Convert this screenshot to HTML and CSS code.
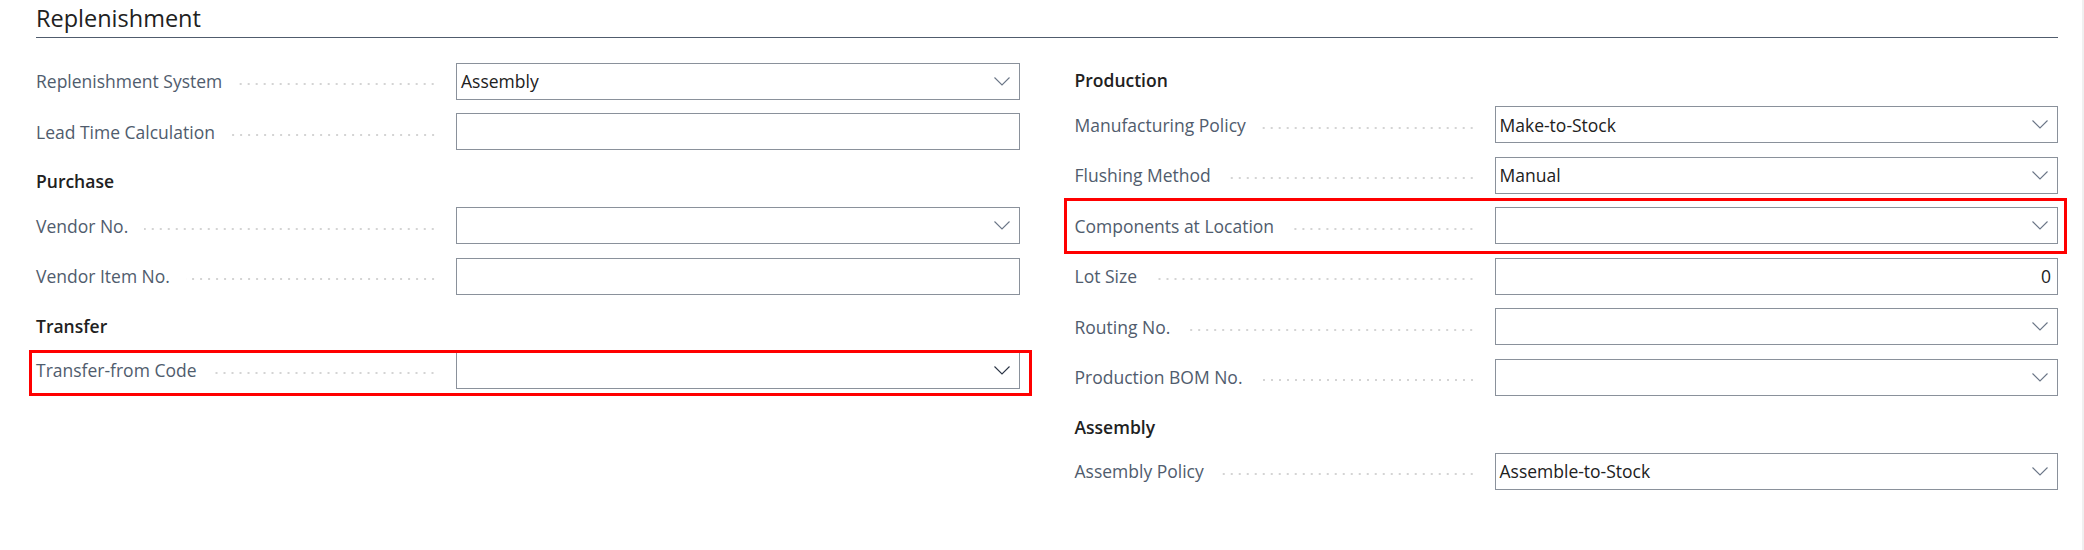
FILE: index.html
```html
<!DOCTYPE html>
<html lang="en">

<head>
    <meta charset="UTF-8">
    <title>Item Card - Replenishment</title>
    <link rel="stylesheet" href="styles.css">
</head>

<body>
    <div class="page">
        <h2 class="title">Replenishment</h2>

        <div class="columns">
            <!-- colonne gauche -->
            <div class="column">
                <div class="field">
                    <div class="caption"><span>Replenishment System</span><i class="dots"></i></div>
                    <div class="box select">
                        <span class="value">Assembly</span>
                        <svg class="chevron" width="16" height="9" viewBox="0 0 16 9"><polyline points="0.5,0.5 8,8 15.5,0.5" /></svg>
                    </div>
                </div>
                <div class="field">
                    <div class="caption"><span>Lead Time Calculation</span><i class="dots"></i></div>
                    <div class="box"></div>
                </div>

                <div class="group">Purchase</div>
                <div class="field">
                    <div class="caption"><span>Vendor No.</span><i class="dots"></i></div>
                    <div class="box select">
                        <span class="value"></span>
                        <svg class="chevron" width="16" height="9" viewBox="0 0 16 9"><polyline points="0.5,0.5 8,8 15.5,0.5" /></svg>
                    </div>
                </div>
                <div class="field">
                    <div class="caption"><span>Vendor Item No.</span><i class="dots"></i></div>
                    <div class="box"></div>
                </div>

                <div class="group">Transfer</div>
                <div class="field">
                    <div class="caption"><span>Transfer-from Code</span><i class="dots"></i></div>
                    <div class="box select">
                        <span class="value"></span>
                        <svg class="chevron dark" width="16" height="9" viewBox="0 0 16 9"><polyline points="0.5,0.5 8,8 15.5,0.5" /></svg>
                    </div>
                    <div class="mark mark-left"></div>
                </div>
            </div>

            <!-- colonne droite -->
            <div class="column">
                <div class="group">Production</div>
                <div class="field">
                    <div class="caption"><span>Manufacturing Policy</span><i class="dots"></i></div>
                    <div class="box select">
                        <span class="value">Make-to-Stock</span>
                        <svg class="chevron" width="16" height="9" viewBox="0 0 16 9"><polyline points="0.5,0.5 8,8 15.5,0.5" /></svg>
                    </div>
                </div>
                <div class="field">
                    <div class="caption"><span>Flushing Method</span><i class="dots"></i></div>
                    <div class="box select">
                        <span class="value">Manual</span>
                        <svg class="chevron" width="16" height="9" viewBox="0 0 16 9"><polyline points="0.5,0.5 8,8 15.5,0.5" /></svg>
                    </div>
                </div>
                <div class="field">
                    <div class="caption"><span>Components at Location</span><i class="dots"></i></div>
                    <div class="box select">
                        <span class="value"></span>
                        <svg class="chevron" width="16" height="9" viewBox="0 0 16 9"><polyline points="0.5,0.5 8,8 15.5,0.5" /></svg>
                    </div>
                    <div class="mark mark-right"></div>
                </div>
                <div class="field">
                    <div class="caption"><span>Lot Size</span><i class="dots"></i></div>
                    <div class="box number"><span class="value">0</span></div>
                </div>
                <div class="field">
                    <div class="caption"><span>Routing No.</span><i class="dots"></i></div>
                    <div class="box select">
                        <span class="value"></span>
                        <svg class="chevron" width="16" height="9" viewBox="0 0 16 9"><polyline points="0.5,0.5 8,8 15.5,0.5" /></svg>
                    </div>
                </div>
                <div class="field">
                    <div class="caption"><span>Production BOM No.</span><i class="dots"></i></div>
                    <div class="box select">
                        <span class="value"></span>
                        <svg class="chevron" width="16" height="9" viewBox="0 0 16 9"><polyline points="0.5,0.5 8,8 15.5,0.5" /></svg>
                    </div>
                </div>

                <div class="group">Assembly</div>
                <div class="field">
                    <div class="caption"><span>Assembly Policy</span><i class="dots"></i></div>
                    <div class="box select">
                        <span class="value">Assemble-to-Stock</span>
                        <svg class="chevron" width="16" height="9" viewBox="0 0 16 9"><polyline points="0.5,0.5 8,8 15.5,0.5" /></svg>
                    </div>
                </div>
            </div>
        </div>
    </div>
</body>

</html>
```

FILE: styles.css
```css
* {
    box-sizing: border-box;
}

body {
    margin: 0;
    min-height: 100vh;
    background: white;
    border-right: 2px solid #f0f0f0;
    font-family: "Segoe UI", "Open Sans", sans-serif;
    color: #212121;
}

.page {
    padding: 0 24px 0 36px;
}

.title {
    margin: 0;
    padding-top: 2px;
    padding-bottom: 3px;
    font-size: 23.5px;
    font-weight: normal;
    line-height: 32px;
    color: #212121;
    border-bottom: 1px solid #505c6d;
}

.columns {
    display: grid;
    grid-template-columns: 1fr 1fr;
    column-gap: 55px;
    padding-top: 24.5px;
}

/* titre de groupe (Purchase, Transfer...) */
.group {
    padding: 5.5px 0 14px 0;
    font-size: 17.5px;
    font-weight: 600;
    line-height: 24px;
    color: #212121;
}

.field {
    position: relative;
    display: flex;
    height: 37px;
    margin-bottom: 13.5px;
}

.caption {
    width: 420px;
    display: flex;
    align-items: center;
    font-size: 17.5px;
    color: #505c6d;
    white-space: nowrap;
}

/* les petits points entre le libelle et la case */
.dots {
    flex: 1;
    height: 2px;
    margin: 6px 19px 0 16px;
    background-image: radial-gradient(circle, #d4d4d4 0.8px, transparent 1.1px);
    background-size: 8px 2px;
    background-repeat: repeat-x;
    background-position: right center;
}

.box {
    flex: 1;
    display: flex;
    align-items: center;
    border: 1px solid #8a919b;
    padding: 0 9px 0 4px;
    font-size: 17.5px;
    color: #212121;
}

.box .value {
    flex: 1;
}

.number {
    padding-right: 6px;
    text-align: right;
}

.chevron {
    display: block;
}

.chevron polyline {
    fill: none;
    stroke: #6b7687;
    stroke-width: 1.1;
}

.chevron.dark polyline {
    stroke: #2b3445;
}

/* cadres rouges de mise en evidence */
.mark {
    position: absolute;
    border: 3px solid #ff0000;
    pointer-events: none;
}

.mark-left {
    top: -1.5px;
    bottom: -7px;
    left: -7.5px;
    right: -12px;
}

.mark-right {
    top: -9px;
    bottom: -9.5px;
    left: -11px;
    right: -8.5px;
}
```
